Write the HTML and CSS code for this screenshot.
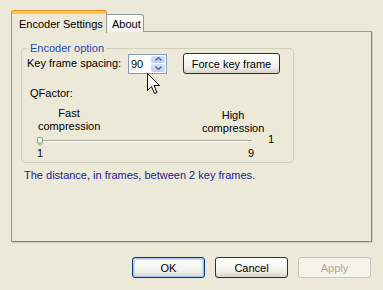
FILE: index.html
```html
<!DOCTYPE html>
<html>
<head>
<meta charset="utf-8">
<link rel="stylesheet" href="styles.css">
</head>
<body>
<div class="dialog">
  <div class="tabs">
    <div class="tab active">Encoder Settings</div>
    <div class="tab">About</div>
  </div>
  <div class="panel">
    <fieldset class="group">
      <legend class="legend">Encoder option</legend>
      <div class="row-key">
        <span class="label-key">Key frame spacing:</span>
        <div class="spin">
          <span class="spin-value">90</span>
          <div class="spin-btns">
            <div class="spin-btn"><svg width="7" height="4" viewBox="0 0 7 4"><path d="M0.5 3.5 L3.5 0.5 L6.5 3.5" fill="none" stroke="#4d6185" stroke-width="1.4"/></svg></div>
            <div class="spin-btn"><svg width="7" height="4" viewBox="0 0 7 4"><path d="M0.5 0.5 L3.5 3.5 L6.5 0.5" fill="none" stroke="#4d6185" stroke-width="1.4"/></svg></div>
          </div>
          <svg class="cursor" width="14" height="22" viewBox="0 0 14 22"><path d="M0.5 0.5 L0.5 17.5 L4.5 13.5 L7.5 20.5 L10 19.5 L7 12.5 L12.5 12.5 Z" fill="#fff" stroke="#000" stroke-width="1"/></svg>
        </div>
        <button class="btn force">Force key frame</button>
      </div>
      <div class="qfactor">QFactor:</div>
      <div class="slider">
        <div class="slider-labels">
          <div class="lbl-fast">Fast<br>compression</div>
          <div class="lbl-high">High<br>compression</div>
        </div>
        <div class="track">
          <div class="track-line"></div>
          <svg class="thumb" width="6" height="9" viewBox="0 0 6 9"><path d="M0.5 0.5 H5.5 V6 L3 8.5 L0.5 6 Z" fill="#f4f4ee" stroke="#8ca28c"/><path d="M1 5.5 H5 L3 7.5 Z" fill="#5fbf5f"/></svg>
        </div>
        <div class="side-value">1</div>
        <div class="slider-nums"><span>1</span><span>9</span></div>
      </div>
    </fieldset>
    <p class="hint">The distance, in frames, between 2 key frames.</p>
  </div>
  <div class="footer">
    <button class="btn default">OK</button>
    <button class="btn">Cancel</button>
    <button class="btn disabled">Apply</button>
  </div>
</div>
</body>
</html>
```

FILE: styles.css
```css
html, body {
  margin: 0;
  padding: 0;
  background: #ece9d8;
}
body {
  font-family: "Liberation Sans", Arial, sans-serif;
  font-size: 11px;
  color: #000;
  line-height: 13px;
}
.dialog {
  width: 383px;
  height: 290px;
  box-sizing: border-box;
  padding: 10px 12px 0 11px;
}
.tabs {
  display: flex;
  align-items: flex-end;
  height: 22px;
}
.tab {
  box-sizing: border-box;
  height: 18px;
  width: 37px;
  border: 1px solid #919b9c;
  border-bottom: none;
  border-left: none;
  border-radius: 0 3px 0 0;
  background: linear-gradient(#fefefe, #f4f3ee);
  padding: 3px 0 0 5px;
}
.tab.active {
  position: relative;
  z-index: 1;
  height: 22px;
  width: 96px;
  border-left: 1px solid #919b9c;
  border-top: 3px solid #ffc83c;
  border-radius: 3px 3px 0 0;
  background: #ece9d8;
  box-shadow: 0 -1px 0 #e68b2c;
  padding: 4px 0 0 7px;
  margin-bottom: -1px;
}
.panel {
  box-sizing: border-box;
  width: 361px;
  height: 211px;
  margin-top: -1px;
  border: 1px solid #919b9c;
  border-right-color: #7e8586;
  border-bottom-color: #7e8586;
  box-shadow: 1px 1px 0 #d0cdbf;
  padding: 10px 0 0 9px;
}
.group {
  box-sizing: border-box;
  width: 273px;
  margin: 0;
  padding: 0 0 2px 0;
  border: 1px solid #d0d0bf;
  border-radius: 4px;
  min-width: 0;
}
.legend {
  margin-left: 6px;
  padding: 0 2px;
  color: #1f48b0;
  line-height: 13px;
}
.row-key {
  display: flex;
  align-items: center;
  height: 21px;
  margin-top: -2px;
}
.label-key {
  width: 101px;
  padding-left: 5px;
}
.spin {
  position: relative;
  box-sizing: border-box;
  display: flex;
  width: 39px;
  height: 20px;
  border: 1px solid #7f9db9;
  background: #fff;
}
.spin-value {
  padding: 3px 0 0 2px;
}
.spin-btns {
  display: flex;
  flex-direction: column;
  gap: 1px;
  margin: 1px 1px 1px auto;
  width: 14px;
}
.spin-btn {
  flex: 1;
  display: flex;
  align-items: center;
  justify-content: center;
  background: linear-gradient(#d7e2fb, #bccdf6);
  border-radius: 2px;
}
.cursor {
  position: absolute;
  left: 18px;
  top: 18px;
}
.btn {
  box-sizing: border-box;
  font-family: "Liberation Sans", Arial, sans-serif;
  font-size: 11px;
  color: #000;
  height: 21px;
  border: 1px solid #003c74;
  border-radius: 3px;
  background: linear-gradient(#ffffff, #f0f0ea 70%, #d6d0c5);
  padding: 0;
}
.force {
  width: 97px;
  margin-left: 16px;
}
.qfactor {
  margin-top: 13px;
  padding-left: 8px;
}
.slider {
  display: grid;
  grid-template-columns: 16px 214px 30px;
  grid-template-rows: 29px 12px 13px;
  margin-top: 6px;
}
.slider-labels {
  grid-column: 2 / 4;
  grid-row: 1;
  display: flex;
  justify-content: space-between;
  align-items: flex-start;
}
.lbl-fast {
  width: 62px;
  text-align: center;
  padding-top: 1px;
}
.lbl-high {
  width: 62px;
  text-align: center;
  padding-top: 3px;
  margin-right: 18px;
}
.track {
  grid-column: 2;
  grid-row: 2;
  position: relative;
  display: flex;
  align-items: center;
}
.track-line {
  width: 100%;
  height: 1px;
  border-top: 1px solid #a7a69a;
  background: #fff;
}
.thumb {
  position: absolute;
  left: -1px;
  top: 2px;
}
.side-value {
  grid-column: 3;
  grid-row: 2;
  padding-left: 16px;
  margin-top: -2px;
}
.slider-nums {
  grid-column: 2;
  grid-row: 3;
  display: flex;
  justify-content: space-between;
  margin: 0 -2px 0 -1px;
}
.hint {
  margin: 6px 0 0 3px;
  color: #1a1a9a;
}
.footer {
  display: flex;
  justify-content: flex-end;
  gap: 10px;
  margin-top: 15px;
}
.footer .btn {
  width: 73px;
  height: 21px;
}
.btn.default {
  box-shadow: inset 0 0 0 1px #a9c4f2, inset 0 0 0 2px #cfdcf5;
}
.btn.disabled {
  border-color: #c9c7ba;
  color: #aca899;
  background: #f5f4ea;
}
```
